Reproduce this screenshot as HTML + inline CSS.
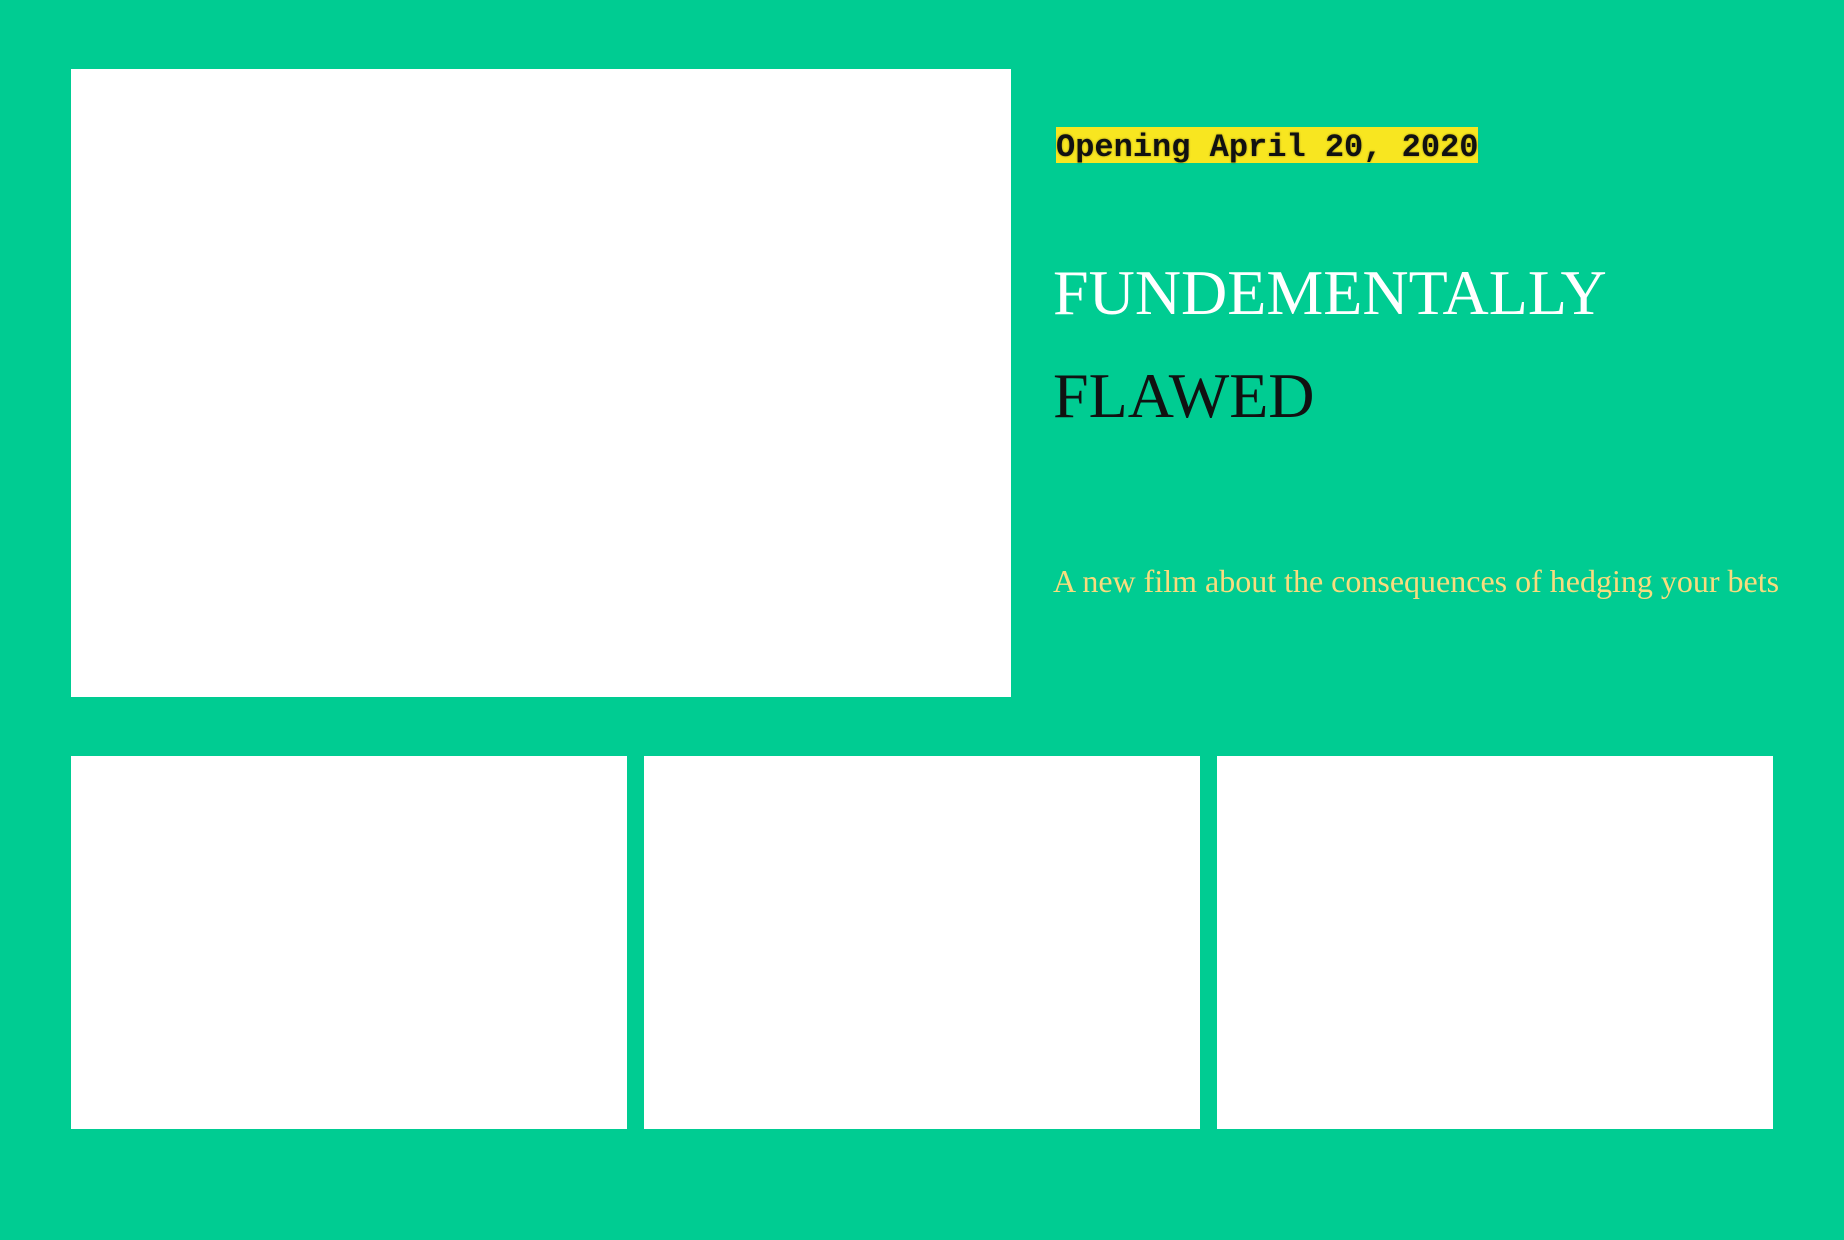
<!DOCTYPE html>
<html><head><meta charset="utf-8"><style>
html,body{margin:0;padding:0}
body{width:1844px;height:1240px;background:#00cc92;position:relative;overflow:hidden}
.b{position:absolute;background:#fff}
.t{position:absolute;white-space:nowrap;line-height:1}
</style></head><body>
<div class="b" style="left:71px;top:69px;width:940px;height:628px"></div>
<div class="b" style="left:71px;top:756px;width:556px;height:373px"></div>
<div class="b" style="left:644px;top:756px;width:556px;height:373px"></div>
<div class="b" style="left:1217px;top:756px;width:556px;height:373px"></div>
<div class="t" style="left:1056px;top:127px;height:36px;width:422px;background:#f8e620"></div>
<div class="t" style="left:1056px;top:130px;height:36px;width:422px;font:bold 32px 'Liberation Mono',monospace;color:#111;line-height:36px;text-shadow:0 0 2px rgba(0,0,0,.4)">Opening April 20, 2020</div>
<div class="t" style="left:1053px;top:256px;font:64px 'Liberation Serif',serif;color:#fff">FUNDEMENTALLY</div>
<div class="t" style="left:1053px;top:359px;font:64px 'Liberation Serif',serif;color:#111">FLAWED</div>
<div class="t" style="left:1053px;top:563px;font:32px 'Liberation Serif',serif;color:#f8dc7e">A new film about the consequences of hedging your bets</div>
</body></html>
